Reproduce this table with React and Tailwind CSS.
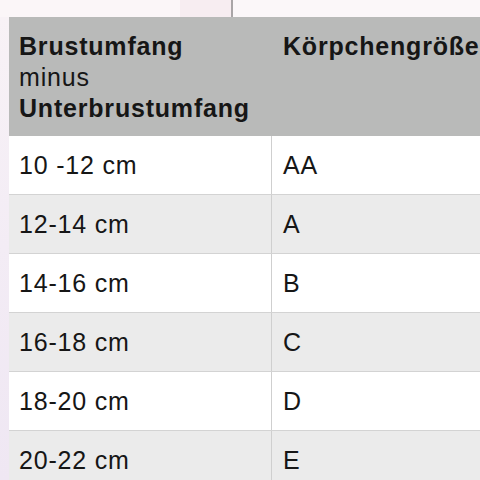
const rows = [
  { range: "10 -12 cm", cup: "AA" },
  { range: "12-14 cm", cup: "A" },
  { range: "14-16 cm", cup: "B" },
  { range: "16-18 cm", cup: "C" },
  { range: "18-20 cm", cup: "D" },
  { range: "20-22 cm", cup: "E" },
];

export default function App() {
  return (
    <div
      className="w-[480px] h-[480px] overflow-hidden flex flex-col bg-[#f6eff4] text-[#161616]"
      style={{ fontFamily: '"Liberation Sans", Arial, sans-serif' }}
    >
      {/* strip above the table */}
      <div className="h-[17px] shrink-0 flex">
        <div className="w-[180px] bg-[#fbf6f8]" />
        <div className="w-[51px] bg-[#f7edf1]" />
        <div className="w-[2px] bg-[#a9a5a7]" />
        <div className="flex-1 bg-[#fbf7f9]" />
      </div>

      <div className="flex flex-1 min-h-0">
        <div className="w-[9px] shrink-0 bg-gradient-to-b from-[#f8f2f6] via-[#f3ecf5] to-[#efe7f3]" />

        <div className="w-[520px] shrink-0 flex flex-col text-[25px] tracking-[0.8px] leading-[30px]">
          {/* header */}
          <div className="flex bg-[#b9bab9] h-[119px] shrink-0">
            <div className="w-[263px] shrink-0 pl-[10px] pt-[14px] leading-[31px]">
              <div className="font-bold">Brustumfang</div>
              <div>minus</div>
              <div className="font-bold">Unterbrustumfang</div>
            </div>
            <div className="pl-[11px] pt-[14px] leading-[31px] font-bold whitespace-nowrap">
              Körpchengröße
            </div>
          </div>

          {rows.map((row, i) => (
            <div
              key={i}
              className={`flex h-[59px] shrink-0 border-b border-[#d3d3d3] ${
                i % 2 === 0 ? "bg-white" : "bg-[#ebebeb]"
              }`}
            >
              <div className="w-[263px] shrink-0 pl-[10px] flex items-center border-r border-[#cfcfcf]">
                {row.range}
              </div>
              <div className="pl-[11px] flex items-center">{row.cup}</div>
            </div>
          ))}
        </div>
      </div>
    </div>
  );
}
